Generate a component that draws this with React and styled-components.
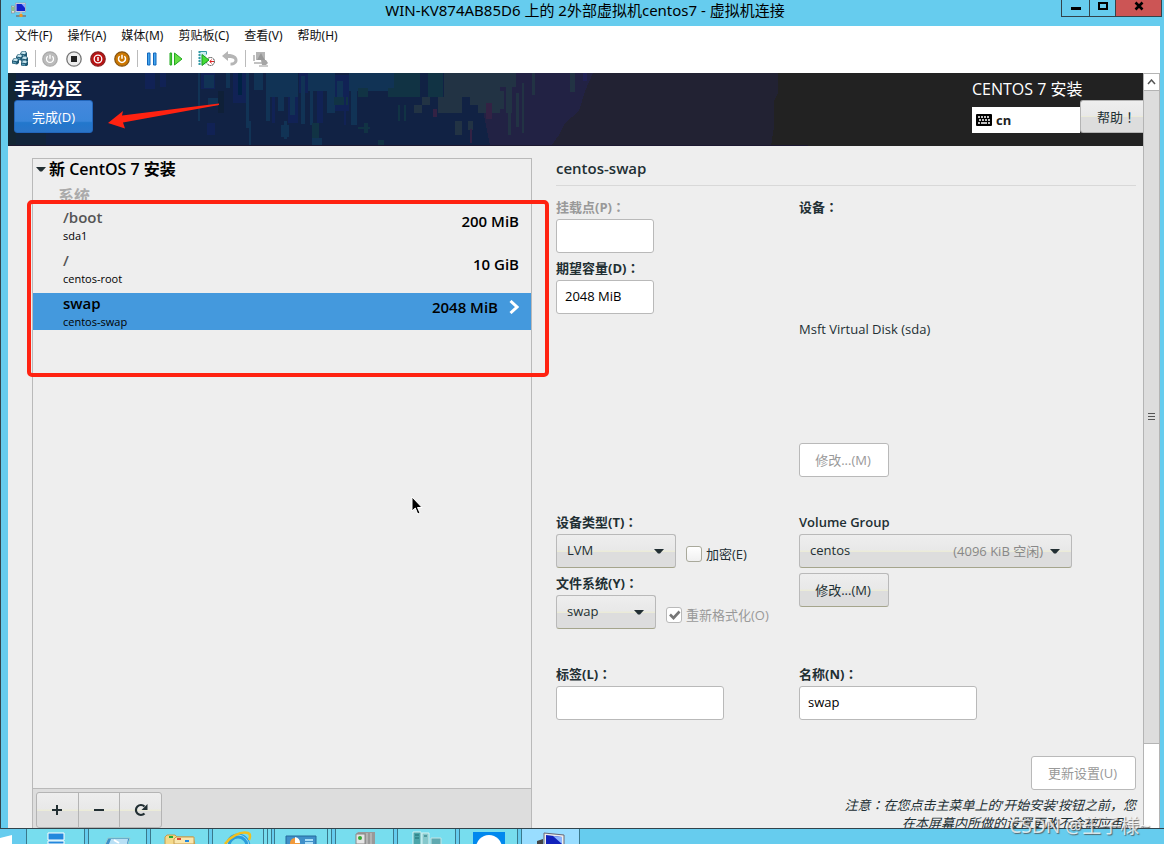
import React from "react";
import styled, { createGlobalStyle, css } from "styled-components";

const GlobalStyle = createGlobalStyle`
  *, *::before, *::after { box-sizing: border-box; }
  html, body { margin: 0; padding: 0; }
  body {
    font-family: "Noto Sans", "Noto Sans CJK SC", sans-serif;
    font-size: 13px;
    color: #222f33;
    background: #66ccee;
    overflow: hidden;
  }
  button, input, select { font: inherit; color: inherit; margin: 0; }
`;

const guestFont = `"Open Sans", "Noto Sans CJK SC", sans-serif`;
const raised = `linear-gradient(#eeeeee, #e8e8e8 48%, #ebebd8 49%, #ebebd8 52%, #dddddd 53%, #dddddd)`;

const Desktop = styled.div`
  display: flex;
  flex-direction: column;
  height: 100vh;
`;

/* ---------- Connection window ---------- */

const Window = styled.div`
  flex: 1;
  min-height: 0;
  display: flex;
  flex-direction: column;
  background: #66ccee;
  border-left: 1px solid #33434b;
  padding: 0 4px 0 7px;
`;

const TitleBar = styled.header`
  display: grid;
  grid-template-columns: 1fr auto 1fr;
  height: 26px;
  flex: none;
  margin-right: -2px;
  color: #000;
`;

const TitleIcon = styled.svg`
  margin: 2px 0 0 3px;
`;

const Title = styled.h1`
  margin: 0;
  font-size: 15px;
  font-weight: 400;
  line-height: 21px;
  white-space: nowrap;
`;

const WindowButtons = styled.div`
  justify-self: end;
  display: flex;
  height: 17px;
  border: solid #33434b;
  border-width: 0 1px 1px;
`;

const WindowButton = styled.button`
  width: ${(p) => p.$width}px;
  padding: 0;
  border: 0;
  border-left: ${(p) => (p.$first ? 0 : 1)}px solid #33434b;
  background: ${(p) => (p.$close ? "#cc5555" : "transparent")};
  display: flex;
  justify-content: center;
`;

const MenuBar = styled.nav`
  display: flex;
  gap: 15px;
  flex: none;
  height: 20px;
  padding-left: 7px;
  background: #fff;
  color: #111;
`;

const MenuItem = styled.button`
  border: 0;
  padding: 0;
  background: none;
  font-size: 12px;
  line-height: 20px;
  white-space: nowrap;
`;

const ToolBar = styled.div`
  display: flex;
  align-items: center;
  gap: 4px;
  flex: none;
  height: 27px;
  padding: 0 0 2px 2px;
  background: #fff;
`;

const ToolButton = styled.button`
  width: 20px;
  height: 20px;
  border: 0;
  padding: 0;
  background: none;
  display: grid;
  place-items: center;
`;

const ToolDivider = styled.span`
  width: 2px;
  height: 17px;
  border-right: 1px solid #bbbbbb;
`;

const Screen = styled.div`
  flex: 1;
  min-height: 0;
  display: flex;
`;

const Guest = styled.div`
  flex: 1;
  min-width: 0;
  display: flex;
  flex-direction: column;
  overflow: hidden;
  background: #eeeeee;
  font-family: ${guestFont};
`;

const ScrollBar = styled.div`
  flex: none;
  width: 17px;
  display: flex;
  flex-direction: column;
  background: #fff;
  border: solid #b4b4b4;
  border-width: 1px 1px 0;
`;

const ScrollArrow = styled.button`
  height: 17px;
  flex: none;
  border: 0;
  border-bottom: 1px solid #b4b4b4;
  background: #fff;
  padding: 0;
  display: grid;
  place-items: center;
`;

const ScrollThumb = styled.div`
  flex: 654;
  background: #dddddd;
  border-bottom: 1px solid #b4b4b4;
  display: grid;
  place-items: center;
`;

const ScrollRest = styled.div`
  flex: 84;
`;

/* ---------- Installer header ---------- */

const Banner = styled.div`
  position: relative;
  flex: none;
  display: flex;
  justify-content: space-between;
  height: 73px;
  padding-left: 6px;
  background: #222222;
  color: #fff;
  overflow: hidden;
`;

const BannerArt = styled.svg`
  position: absolute;
  inset: 0 auto 0 0;
`;

const BannerSide = styled.div`
  position: relative;
  display: flex;
  flex-direction: column;
  align-items: flex-start;
`;

const ScreenTitle = styled.h2`
  margin: 0;
  padding: 5px 0 0;
  font-size: ${(p) => (p.$light ? 16 : 17)}px;
  line-height: 22px;
  font-weight: ${(p) => (p.$light ? 400 : 700)};
`;

const DoneButton = styled.button`
  width: 79px;
  height: 33px;
  border: 1px solid #2266bb;
  border-radius: 3px;
  background: linear-gradient(#4488dd, #3a86da 65%, #2277cc 70%, #2a74c8);
  color: #fff;
  padding: 0;
`;

const Arrow = styled.svg`
  position: absolute;
  left: 92px;
  top: 28px;
`;

const HeaderTools = styled.div`
  display: flex;
  align-items: flex-end;
`;

const Layout = styled.div`
  display: flex;
  align-items: center;
  gap: 4px;
  width: 108px;
  height: 26px;
  padding-left: 4px;
  background: #fff;
  color: #222;
  font-weight: 700;
`;

const HelpButton = styled.button`
  width: 63px;
  height: 33px;
  padding: 0 0 0 16px;
  border: 1px solid #b4b4b4;
  border-width: 1px 0 1px 1px;
  border-radius: 3px 0 0 3px;
  background: ${raised};
  color: #222f33;
  text-align: left;
  white-space: nowrap;
  overflow: hidden;
`;

/* ---------- Partitioning ---------- */

const Body = styled.main`
  flex: 1;
  min-height: 0;
  display: grid;
  grid-template-columns: 500fr 580fr;
  grid-template-rows: minmax(0, 1fr);
  gap: 24px;
  padding: 12px 7px 0 24px;
`;

const MountPanel = styled.section`
  position: relative;
  display: flex;
  flex-direction: column;
  border: 1px solid #b9b9b9;
  border-bottom: 0;
  color: #000;
`;

const Expander = styled.button`
  display: flex;
  align-items: center;
  gap: 3px;
  height: 20px;
  padding: 0 0 0 3px;
  border: 0;
  background: none;
  font-size: 16px;
  line-height: 20px;
  font-weight: 600;
`;

const Category = styled.h3`
  margin: 0;
  padding: 6px 0 0 25px;
  height: 28px;
  line-height: 22px;
  font-size: 16px;
  font-weight: 700;
  color: #aaaaaa;
`;

const MountList = styled.ul`
  flex: 1;
  margin: 0;
  padding: 0;
  list-style: none;
  display: flex;
  flex-direction: column;
  gap: 6px;
`;

const MountRow = styled.li`
  display: flex;
  justify-content: space-between;
  align-items: flex-start;
  height: 37px;
  padding: 0 12px 0 30px;
  background: ${(p) => (p.$selected ? "#4499dd" : "transparent")};
`;

const MountName = styled.div`
  font-size: 15px;
  line-height: 20px;
  font-weight: 600;
  color: ${(p) => (p.$selected ? "#000" : "#555")};
`;

const MountDevice = styled.div`
  font-size: 11px;
  line-height: 18px;
`;

const MountSize = styled.div`
  display: flex;
  align-items: center;
  gap: 11px;
  font-size: 15px;
  line-height: 28px;
  font-weight: 600;
`;

const PanelFooter = styled.div`
  flex: none;
  height: 40px;
  padding: 3px;
  border-top: 1px solid #b9b9b9;
  background: #dddddd;
`;

const ButtonGroup = styled.div`
  display: flex;
  width: 126px;
  height: 36px;
  border: 1px solid #b4b4b4;
  border-radius: 3px;
  background: ${raised};
`;

const GroupButton = styled.button`
  flex: 1;
  padding: 0;
  border: 0;
  background: none;
  display: grid;
  place-items: center;
  & + & { border-left: 1px solid #b4b4b4; }
`;

const RedFrame = styled.div`
  position: absolute;
  left: -6px;
  right: -18px;
  top: 41px;
  height: 177px;
  border: 4px solid #ff2211;
  border-radius: 5px;
  pointer-events: none;
`;

const Details = styled.section`
  display: flex;
  flex-direction: column;
  & > * { flex: none; }
`;

const DetailsTitle = styled.h3`
  margin: 0 0 9px;
  height: 28px;
  font-size: 15px;
  line-height: 21px;
  font-weight: 600;
  border-bottom: 1px solid #d8d8d8;
`;

const Columns = styled.div`
  display: grid;
  grid-template-columns: 243fr 337fr;
  margin-bottom: 33px;
`;

const Column = styled.div`
  display: flex;
  flex-direction: column;
  align-items: flex-start;
  gap: ${(p) => p.$gap || 3}px;
`;

const Field = styled.div`
  display: flex;
  flex-direction: column;
  align-items: flex-start;
`;

const Label = styled.label`
  line-height: 24px;
  font-weight: ${(p) => (p.$plain ? 600 : 700)};
  font-size: 13px;
  color: ${(p) => (p.$muted ? "#999" : "inherit")};
`;

/* Full-width mark set in the middle of its cell */
const WideMark = styled.span`
  font-family: "Noto Sans CJK TC", sans-serif;
`;

const TextBox = styled.input`
  width: ${(p) => p.$width}px;
  height: 34px;
  padding: 0 8px 2px;
  border: 1px solid #b9b9b9;
  border-radius: 3px;
  background: #fff;
  color: #000;
`;

const PushButton = styled.button`
  width: ${(p) => p.$width}px;
  height: 34px;
  padding: 0 2px 2px 0;
  border: 1px solid #b9b9b9;
  border-radius: 3px;
  background: ${raised};
  border-bottom-color: #a5a58c;
  &:disabled {
    background: #fff;
    color: #999;
    border-color: #b9b9b9;
  }
`;

const FieldRow = styled.div`
  display: flex;
  align-items: center;
  gap: 10px;
`;

const SelectBox = styled.div`
  display: grid;
  width: ${(p) => p.$width}px;
  align-items: center;
  & > * { grid-area: 1 / 1; }
`;

const Select = styled.select`
  appearance: none;
  width: 100%;
  height: 34px;
  padding: 0 10px 2px;
  border: 1px solid #b9b9b9;
  border-bottom-color: #a5a58c;
  border-radius: 3px;
  background: ${raised};
`;

const SelectEnd = styled.span`
  justify-self: end;
  display: flex;
  align-items: center;
  gap: 7px;
  padding-right: 12px;
  color: #888;
  line-height: 18px;
  pointer-events: none;
`;

const CheckLabel = styled.label`
  display: flex;
  align-items: center;
  gap: 4px;
  line-height: 20px;
  padding-top: 6px;
  white-space: nowrap;
  color: ${(p) => (p.$muted ? "#999" : "inherit")};
`;

const CheckBox = styled.span`
  display: grid;
  width: 16px;
  height: 16px;
  & > * { grid-area: 1 / 1; }
`;

const CheckInput = styled.input`
  appearance: none;
  width: 16px;
  height: 16px;
  border: 1px solid #a9a99b;
  border-radius: 3px;
  background: linear-gradient(#fff, #f0f0f0);
  &:disabled { background: #fff; border-color: #b9b9b9; }
`;

const DeviceText = styled.div`
  height: 224px;
  display: flex;
  align-items: center;
  line-height: 20px;
  padding-bottom: 4px;
`;

const Closing = styled.div`
  display: flex;
  flex-direction: column;
  align-items: flex-end;
  gap: 6px;
  padding-top: 3px;
`;

const Note = styled.p`
  margin: 0;
  max-width: 300px;
  text-align: right;
  font-style: italic;
  line-height: 18px;
`;

/* ---------- Task bar ---------- */

const TaskBar = styled.footer`
  flex: none;
  display: flex;
  gap: 3px;
  height: 16px;
  overflow: hidden;
  border-top: 1px solid #33434b;
  background: #66ccee;
`;

const StartButton = styled.button`
  width: 23px;
  border: 0;
  padding: 0;
  background: none;
  text-align: left;
`;

const TaskButton = styled.button`
  width: ${(p) => p.$width || 59}px;
  padding: 0;
  border: solid #3a788c;
  border-width: 0 1px;
  background: ${(p) => (p.$active ? "#99ddff" : "#77ddee")};
  display: flex;
  justify-content: center;
  align-items: flex-start;
  ${(p) =>
    p.$stacked &&
    css`
      margin-right: ${p.$stacked === "double" ? 7 : 4}px;
      box-shadow: ${p.$stacked === "double"
        ? "3px 0 0 0 #77ddee, 4px 0 0 0 #3a788c, 7px 0 0 0 #77ddee, 8px 0 0 0 #3a788c"
        : "3px 0 0 0 #77ddee, 4px 0 0 0 #3a788c"};
    `}
`;

const Watermark = styled.div`
  position: absolute;
  right: 14px;
  bottom: 6px;
  font-size: 19px;
  line-height: 24px;
  color: rgba(255, 255, 255, 0.75);
  text-shadow: 1px 1px 1px rgba(80, 80, 80, 0.8);
  pointer-events: none;
`;

const Pointer = styled.svg`
  position: absolute;
  left: 378px;
  top: 337px;
  pointer-events: none;
`;

/* ---------- Drawings ---------- */

const MonitorIcon = () => (
  <TitleIcon width="16" height="16" viewBox="0 0 16 16" aria-hidden="true">
    <rect x=".5" y="4" width="3" height="7" fill="#ddd" stroke="#888" strokeWidth=".6" />
    <path d="M1 6h2M1 8h2" stroke="#3a3" />
    <path d="M4.500 1h10v9h-10z" fill="#dde" stroke="#99a" strokeWidth=".6" />
    <path d="M5.500 2h8.500v7H5.500z" fill="#1122cc" />
    <path d="M10.500 2H14v4z" fill="#88aaff" />
    <path d="M9 10h2v2H9z" fill="#bbb" />
    <path d="M5 14h10" stroke="#777" strokeWidth="1.500" />
    <path d="M8.500 12h3v3h-3z" fill="#ee9922" />
  </TitleIcon>
);

const Caret = () => (
  <svg width="10" height="5" viewBox="0 0 10 5" aria-hidden="true">
    <path d="M0 0h10L6 4.500H4z" fill="#222f33" />
  </svg>
);

const CtrlAltDelIcon = () => (
  <svg width="16" height="15" viewBox="0 0 16 15">
    {[[8, 0], [4, 3], [9, 5], [9, 9], [0, 7]].map(([x, y]) => (
      <g key={`${x}-${y}`} transform={`translate(${x} ${y})`}>
        <path d="M0 2.500L2 0h3.500L7 2v3L5 6.500l-5-1z" fill="#1d5670" />
        <path d="M.8 2.500L2.300.6h2.700l1 1.400-1.200 1.300z" fill="#c5e4ee" />
        <path d="M.8 3.500l3.400.8v1.500L.8 5z" fill="#5f9db5" />
      </g>
    ))}
  </svg>
);

const RoundIcon = ({ fill, ring, children }) => (
  <svg width="16" height="16" viewBox="0 0 16 16">
    <circle cx="8" cy="8" r="7.200" fill={fill} stroke={ring} strokeWidth="1.300" />
    {children}
  </svg>
);

const PowerMark = ({ width = 1.3 }) => (
  <path d="M5.700 5.300a3.500 3.500 0 1 0 4.600 0M8 3.800v4" fill="none" stroke="#fff" strokeWidth={width} />
);

const PauseIcon = () => (
  <svg width="12" height="14" viewBox="0 0 12 14">
    <path d="M1.500 1h2.500v12H1.500zM7.500 1H10v12H7.500z" fill="#44a5ee" stroke="#1166bb" />
  </svg>
);

const ResumeIcon = () => (
  <svg width="14" height="14" viewBox="0 0 14 14">
    <path d="M1 1h1.600v12H1zM5.500 1l7.500 6-7.500 6z" fill="#66dd44" stroke="#22aa22" />
  </svg>
);

const CheckpointIcon = () => (
  <svg width="17" height="17" viewBox="0 0 17 17">
    <path d="M1 1h7v14H1z" fill="#cdeef2" />
    <path d="M1.500 1v14" stroke="#339aa5" strokeWidth="2" strokeDasharray="2 1" />
    <path d="M1 1.500h7.500v3" fill="none" stroke="#339aa5" />
    <circle cx="12.500" cy="11.500" r="4" fill="#fff" stroke="#444" strokeDasharray="2 .6" />
    <path d="M4 4.500l7 5.500-7 5.500z" fill="#44dd33" stroke="#1b9922" />
    <path d="M16 11.500h-4l1.500-2M12 11.500l1.500 2" stroke="#d22" fill="none" />
  </svg>
);

const RevertIcon = () => (
  <svg width="16" height="15" viewBox="0 0 16 15">
    <path d="M0 5l6-5v3c6 0 9.500 2.500 9.500 6.200 0 3.300-3 5.200-7 5.300v-2.700c2 0 4-.8 4-2.500C12.500 7.500 10 7 6 7v3z" fill="#b5b5b5" />
  </svg>
);

const SessionIcon = () => (
  <svg width="17" height="16" viewBox="0 0 17 16">
    <path d="M4 1h9v8H4z" fill="#b5b5b5" />
    <path d="M5 9l4-7 2 4 2 3z" fill="#979797" />
    <path d="M1 4h2v6H1zM2 11h9v2H2z" fill="#c2c2c2" />
    <path d="M9 9h5l2 3-2 2h-4z" fill="#a5a5a5" />
    <path d="M7 15h9" stroke="#999" />
  </svg>
);

const KeyboardIcon = () => (
  <svg width="16" height="12" viewBox="0 0 16 12" aria-hidden="true">
    <rect width="16" height="12" rx="1" fill="#000" />
    <path d="M2 3h12M3 6h11" stroke="#fff" strokeWidth="1.600" strokeDasharray="2 1" />
    <path d="M2 9h2M5 9h6M12 9h2" stroke="#fff" strokeWidth="1.600" />
  </svg>
);

/* x, y, width, height, colour of each block in the banner's digital rain */
const blocks = [
  [0, 0, 8, 73, "#132533"], [8, 40, 30, 33, "#12243a"],
  [137, 0, 10, 16, "#112255"], [152, 0, 6, 14, "#112255"], [190, 0, 2, 48, "#113355"],
  [193, 0, 14, 16, "#112255"], [196, 2, 10, 13, "#113355"], [200, 25, 10, 8, "#113355"],
  [210, 18, 6, 22, "#0f2038"], [218, 0, 4, 15, "#113355"], [225, 0, 14, 30, "#112255"],
  [230, 0, 4, 22, "#002244"], [238, 0, 3, 55, "#113355"], [246, 0, 9, 17, "#113355"],
  [258, 0, 4, 48, "#113355"], [262, 0, 28, 24, "#113355"], [270, 24, 6, 14, "#113355"],
  [280, 24, 10, 26, "#112255"], [282, 20, 5, 22, "#113355"], [291, 0, 9, 20, "#112255"],
  [293, 3, 4, 48, "#113355"], [300, 0, 20, 18, "#113355"], [302, 18, 3, 34, "#113355"],
  [309, 18, 6, 32, "#112255"], [319, 0, 8, 40, "#113355"], [327, 2, 14, 36, "#112255"],
  [329, 8, 6, 17, "#113355"], [326, 24, 14, 8, "#113344"], [341, 0, 52, 18, "#113355"],
  [343, 0, 6, 52, "#113355"], [350, 15, 10, 9, "#113344"], [386, 0, 26, 24, "#113344"],
  [380, 15, 14, 9, "#113344"], [412, 0, 22, 24, "#112244"], [420, 0, 15, 24, "#113344"],
  [436, 0, 40, 24, "#223344"], [442, 24, 12, 16, "#223344"], [430, 24, 24, 16, "#223344"],
  [462, 0, 14, 32, "#223344"], [470, 0, 22, 40, "#223344"], [406, 32, 8, 8, "#223344"],
  [414, 24, 8, 8, "#223344"],
  [390, 32, 2, 16, "#113344"], [396, 32, 2, 16, "#113344"], [425, 36, 4, 8, "#332244"],
  [447, 48, 7, 14, "#223344"], [460, 48, 5, 9, "#223344"], [462, 56, 2, 14, "#332244"],
  [488, 0, 20, 14, "#223344"], [486, 18, 10, 18, "#223344"], [498, 14, 6, 26, "#223344"],
  [500, 22, 3, 40, "#223344"], [508, 20, 3, 34, "#223344"], [514, 10, 2, 50, "#223344"],
  [478, 30, 6, 16, "#332244"], [524, 0, 3, 22, "#223344"],
  [562, 0, 5, 19, "#223344"], [575, 0, 4, 8, "#222255"],
  [241, 48, 2, 25, "#113355"], [199, 50, 8, 12, "#112255"], [273, 52, 8, 12, "#113355"],
  [276, 48, 3, 18, "#113355"], [304, 50, 7, 15, "#113344"], [304, 65, 10, 8, "#113355"],
  [350, 54, 12, 2, "#113344"], [356, 50, 4, 10, "#113344"], [370, 67, 6, 6, "#113344"],
  [264, 24, 3, 26, "#112255"], [287, 24, 2, 24, "#112255"], [336, 20, 2, 32, "#112255"],
];

const RainArt = () => (
  <BannerArt width="800" height="73" viewBox="0 0 800 73" aria-hidden="true" shapeRendering="crispEdges">
    <rect width="800" height="73" fill="#222222" />
    <path d="M0 0h770v20l-4 8v26l-3 19H0z" fill="#222233" />
    <path d="M0 0h585l-8 18-6 20-14 12-6 12-8 11H0z" fill="#222244" />
    <path d="M0 0h480v30l-4 12 6 31H0z" fill="#112244" />
    {blocks.map(([x, y, w, h, c], i) => (
      <rect key={i} x={x} y={y} width={w} height={h} fill={c} />
    ))}
    <path d="M0 72.500h800" stroke="#1c1830" />
  </BannerArt>
);

const taskIcons = {
  server: (
    <svg width="18" height="15" viewBox="0 0 18 15">
      <path d="M1 4h16v7H1zM1 12h16v3H1z" fill="#2288dd" stroke="#fff" />
    </svg>
  ),
  shell: (
    <svg width="30" height="15" viewBox="0 0 30 15">
      <path d="M5 9h22l-3 9H1z" fill="#3b8fc8" stroke="#9cc" />
      <path d="M8 10h17l-1 5H6z" fill="#b9e0f5" />
      <path d="M11 11l5 3" stroke="#fff" strokeWidth="2" />
    </svg>
  ),
  folder: (
    <svg width="32" height="15" viewBox="0 0 32 15">
      <path d="M1 8l2-2h8l2 2h16l2 8H1z" fill="#f4d98b" stroke="#c69b4a" />
      <path d="M10 10l2-2h18v7H10z" fill="#f9e6ae" stroke="#c69b4a" />
      <path d="M5 7h4v2H5z" fill="#2a3" />
      <path d="M13 9h4v2h-4z" fill="#d43" />
      <path d="M21 11h4v2h-4z" fill="#28d" />
    </svg>
  ),
  browser: (
    <svg width="32" height="15" viewBox="0 0 32 15">
      <circle cx="16" cy="17" r="10" fill="none" stroke="#2c9ddb" strokeWidth="5" />
      <circle cx="16" cy="17" r="11" fill="none" stroke="#8fd8f5" />
      <path d="M3 15C8 8 18 2 26 4c3 1 2 5 1 7" fill="none" stroke="#f0c020" strokeWidth="2.500" />
    </svg>
  ),
  control: (
    <svg width="32" height="15" viewBox="0 0 32 15">
      <path d="M1 7h30v9H1z" fill="#3f8fc9" stroke="#256a9c" />
      <circle cx="10" cy="14" r="5" fill="#f29a3a" />
      <path d="M10 14V8a6 6 0 0 1 5 6z" fill="#fff" />
      <path d="M20 10h8v2h-8zM20 13h8v2h-8z" fill="#a9def7" />
    </svg>
  ),
  tower: (
    <svg width="24" height="15" viewBox="0 0 24 15">
      <path d="M3 5l2-2h17v12H3z" fill="#999" />
      <path d="M3 5h9v10H3z" fill="#e5e5e5" stroke="#888" />
      <circle cx="7" cy="9" r="2" fill="#3a3" />
      <path d="M14 4v11M18 4v11" stroke="#ccc" />
    </svg>
  ),
  cluster: (
    <svg width="32" height="15" viewBox="0 0 32 15">
      <path d="M2 3h8v13H2z" fill="#4aa5aa" stroke="#d5f2f2" />
      <path d="M11 4h7v12h-7z" fill="#85c8cc" stroke="#d5f2f2" />
      <path d="M20 9h10v7H20z" fill="#5fa9b0" stroke="#c5e5e5" />
      <path d="M4 6h4M4 9h4M13 7h3" stroke="#1d6c72" />
    </svg>
  ),
  viewer: (
    <svg width="32" height="15" viewBox="0 0 32 15">
      <path d="M0 3h32v12H0z" fill="#0088ee" />
      <circle cx="16" cy="19" r="13" fill="#fff" />
    </svg>
  ),
  remote: (
    <svg width="30" height="15" viewBox="0 0 30 15">
      <path d="M8 4l20 2v10H8z" fill="#eee" stroke="#667" />
      <path d="M10 6l16 2v8H10z" fill="#1122bb" />
      <path d="M17 7l9 1v7z" fill="#8ab4ff" />
      <path d="M1 12l6-2v6H1z" fill="#444" />
    </svg>
  ),
};

const tasks = [
  { id: "server", name: "服务器管理器" },
  { id: "shell", name: "PowerShell" },
  { id: "folder", name: "文件资源管理器" },
  { id: "browser", name: "浏览器", width: 52, stacked: "double" },
  { id: "control", name: "控制面板", width: 54, stacked: "single" },
  { id: "tower", name: "计算机" },
  { id: "cluster", name: "Hyper-V" },
  { id: "viewer", name: "远程协助" },
  { id: "remote", name: "虚拟机连接", active: true },
];

const mounts = [
  { name: "/boot", device: "sda1", size: "200 MiB" },
  { name: "/", device: "centos-root", size: "10 GiB" },
  { name: "swap", device: "centos-swap", size: "2048 MiB", selected: true },
];

const menus = ["文件(F)", "操作(A)", "媒体(M)", "剪贴板(C)", "查看(V)", "帮助(H)"];

/* ---------- Parts ---------- */

function TextField({ id, label, width, value = "", muted }) {
  return (
    <Field>
      <Label htmlFor={id} $muted={muted}>{label}<WideMark>：</WideMark></Label>
      <TextBox id={id} $width={width} defaultValue={value} disabled={muted} />
    </Field>
  );
}

function SelectField({ id, label, width, value, hint, colon = true, children }) {
  return (
    <Field>
      <Label htmlFor={id} $plain={!colon}>{label}{colon && <WideMark>：</WideMark>}</Label>
      <FieldRow>
        <SelectBox $width={width}>
          <Select id={id} defaultValue={value}>
            <option>{value}</option>
          </Select>
          <SelectEnd>
            {hint}
            <Caret />
          </SelectEnd>
        </SelectBox>
        {children}
      </FieldRow>
    </Field>
  );
}

function Check({ label, checked, muted }) {
  return (
    <CheckLabel $muted={muted}>
      <CheckBox>
        <CheckInput type="checkbox" defaultChecked={checked} disabled={muted} />
        {checked && (
          <svg width="16" height="16" viewBox="0 0 16 16" aria-hidden="true">
            <path d="M4 7.500l3.500 3.500L13.500 4.500" fill="none" stroke="#777" strokeWidth="2.600" />
          </svg>
        )}
      </CheckBox>
      {label}
    </CheckLabel>
  );
}

export default function App() {
  return (
    <Desktop>
      <GlobalStyle />
      <Window>
        <TitleBar>
          <MonitorIcon />
          <Title>WIN-KV874AB85D6 上的 2外部虚拟机centos7 - 虚拟机连接</Title>
          <WindowButtons>
            <WindowButton $width={27} $first aria-label="最小化">
              <svg width="10" height="12"><path d="M0 8.500h10" stroke="#000" strokeWidth="3" /></svg>
            </WindowButton>
            <WindowButton $width={26} aria-label="最大化">
              <svg width="10" height="12"><path d="M1 3h8v6H1z" fill="none" stroke="#000" strokeWidth="2" /></svg>
            </WindowButton>
            <WindowButton $width={46} $close aria-label="关闭">
              <svg width="10" height="12"><path d="M1.500 2.500l7 7M8.500 2.500l-7 7" stroke="#000" strokeWidth="2.600" /></svg>
            </WindowButton>
          </WindowButtons>
        </TitleBar>
        <MenuBar>
          {menus.map((m) => <MenuItem key={m}>{m}</MenuItem>)}
        </MenuBar>
        <ToolBar>
          <ToolButton aria-label="Ctrl+Alt+Delete"><CtrlAltDelIcon /></ToolButton>
          <ToolDivider />
          <ToolButton aria-label="启动"><RoundIcon fill="#bbb" ring="#aaa"><PowerMark /></RoundIcon></ToolButton>
          <ToolButton aria-label="强行关闭">
            <RoundIcon fill="#eee" ring="#777"><path d="M5 5h6v6H5z" fill="#222" /></RoundIcon>
          </ToolButton>
          <ToolButton aria-label="关机">
            <RoundIcon fill="#bb1111" ring="#882222">
              <circle cx="8" cy="8" r="3.800" fill="none" stroke="#fff" strokeWidth="1.300" />
              <path d="M8 6v4" stroke="#fff" strokeWidth="1.500" />
            </RoundIcon>
          </ToolButton>
          <ToolButton aria-label="保存">
            <RoundIcon fill="#cc7700" ring="#885511"><PowerMark width={1.5} /></RoundIcon>
          </ToolButton>
          <ToolDivider />
          <ToolButton aria-label="暂停"><PauseIcon /></ToolButton>
          <ToolButton aria-label="继续"><ResumeIcon /></ToolButton>
          <ToolDivider />
          <ToolButton aria-label="检查点"><CheckpointIcon /></ToolButton>
          <ToolButton aria-label="还原"><RevertIcon /></ToolButton>
          <ToolDivider />
          <ToolButton aria-label="增强会话"><SessionIcon /></ToolButton>
        </ToolBar>

        <Screen>
          <Guest>
            <Banner>
              <RainArt />
              <BannerSide>
                <ScreenTitle>手动分区</ScreenTitle>
                <DoneButton>完成(D)</DoneButton>
                <Arrow width="122" height="30" viewBox="0 0 122 30" aria-hidden="true">
                  <path d="M2 22L17 10l-1 4.500L113 2.500v1.500L17 21.500l2 6z" fill="#ff2211" />
                </Arrow>
              </BannerSide>
              <BannerSide>
                <ScreenTitle $light>CENTOS 7 安装</ScreenTitle>
                <HeaderTools>
                  <Layout><KeyboardIcon />cn</Layout>
                  <HelpButton>帮助<WideMark>！</WideMark></HelpButton>
                </HeaderTools>
              </BannerSide>
            </Banner>

            <Body>
              <MountPanel>
                <Expander aria-expanded="true"><Caret />新 CentOS 7 安装</Expander>
                <Category>系统</Category>
                <MountList>
                  {mounts.map((m) => (
                    <MountRow key={m.name} $selected={m.selected}>
                      <div>
                        <MountName $selected={m.selected}>{m.name}</MountName>
                        <MountDevice>{m.device}</MountDevice>
                      </div>
                      <MountSize>
                        {m.size}
                        {m.selected && (
                          <svg width="10" height="14" viewBox="0 0 10 14" aria-hidden="true">
                            <path d="M1.500 1L8 7l-6.500 6" fill="none" stroke="#fff" strokeWidth="3" />
                          </svg>
                        )}
                      </MountSize>
                    </MountRow>
                  ))}
                </MountList>
                <PanelFooter>
                  <ButtonGroup>
                    <GroupButton aria-label="添加">
                      <svg width="12" height="12"><path d="M6 1v10M1 6h10" stroke="#222f33" strokeWidth="2" /></svg>
                    </GroupButton>
                    <GroupButton aria-label="删除">
                      <svg width="12" height="12"><path d="M1 6h10" stroke="#222f33" strokeWidth="2" /></svg>
                    </GroupButton>
                    <GroupButton aria-label="重新载入">
                      <svg width="14" height="14" viewBox="0 0 14 14">
                        <path d="M10.500 10.500a5 5 0 1 1 0-7" fill="none" stroke="#222f33" strokeWidth="2.200" />
                        <path d="M13.500 1v6h-6z" fill="#222f33" />
                      </svg>
                    </GroupButton>
                  </ButtonGroup>
                </PanelFooter>
                <RedFrame />
                <Pointer width="12" height="20" viewBox="0 0 12 20" aria-hidden="true">
                  <path d="M1 1v14l3.300-3 2.400 6 2.300-1-2.500-5.500H11z" fill="#000" stroke="#fff" />
                </Pointer>
              </MountPanel>

              <Details>
                <DetailsTitle>centos-swap</DetailsTitle>
                <Columns>
                  <Column>
                    <TextField id="mount" label="挂载点(P)" width={98} muted />
                    <TextField id="capacity" label="期望容量(D)" width={98} value="2048 MiB" />
                  </Column>
                  <Field>
                    <Label as="div">设备<WideMark>：</WideMark></Label>
                    <DeviceText>Msft Virtual Disk (sda)</DeviceText>
                    <PushButton $width={90} disabled>修改...(M)</PushButton>
                  </Field>
                </Columns>
                <Columns>
                  <Column>
                    <SelectField id="type" label="设备类型(T)" width={120} value="LVM">
                      <Check label="加密(E)" />
                    </SelectField>
                    <SelectField id="fs" label="文件系统(Y)" width={100} value="swap">
                      <Check label="重新格式化(O)" checked muted />
                    </SelectField>
                  </Column>
                  <Column $gap={5}>
                    <SelectField id="vg" label="Volume Group" colon={false} width={273} value="centos" hint="(4096 KiB 空闲)" />
                    <PushButton $width={90}>修改...(M)</PushButton>
                  </Column>
                </Columns>
                <Columns>
                  <TextField id="label" label="标签(L)" width={168} />
                  <TextField id="name" label="名称(N)" width={178} value="swap" />
                </Columns>
                <Closing>
                  <PushButton $width={105} disabled>更新设置(U)</PushButton>
                  <Note>注意<WideMark>：</WideMark>在您点击主菜单上的'开始安装'按钮之前，您在本屏幕内所做的设置更改不会被应用。</Note>
                </Closing>
              </Details>
            </Body>
          </Guest>
          <ScrollBar>
            <ScrollArrow aria-label="向上滚动">
              <svg width="9" height="6"><path d="M1 5l3.500-4L8 5" fill="none" stroke="#555" strokeWidth="1.500" /></svg>
            </ScrollArrow>
            <ScrollThumb>
              <svg width="7" height="8"><path d="M0 .5h7M0 3.500h7M0 6.500h7" stroke="#555" /></svg>
            </ScrollThumb>
            <ScrollRest />
          </ScrollBar>
        </Screen>
      </Window>
      <TaskBar>
        <StartButton aria-label="开始">
          <svg width="14" height="15" viewBox="0 0 14 15"><path d="M0 9l12-3v9H0z" fill="#fff" /></svg>
        </StartButton>
        {tasks.map((t) => (
          <TaskButton key={t.id} aria-label={t.name} $width={t.width} $active={t.active} $stacked={t.stacked}>
            {taskIcons[t.id]}
          </TaskButton>
        ))}
      </TaskBar>
      <Watermark>CSDN @王子様~</Watermark>
    </Desktop>
  );
}
